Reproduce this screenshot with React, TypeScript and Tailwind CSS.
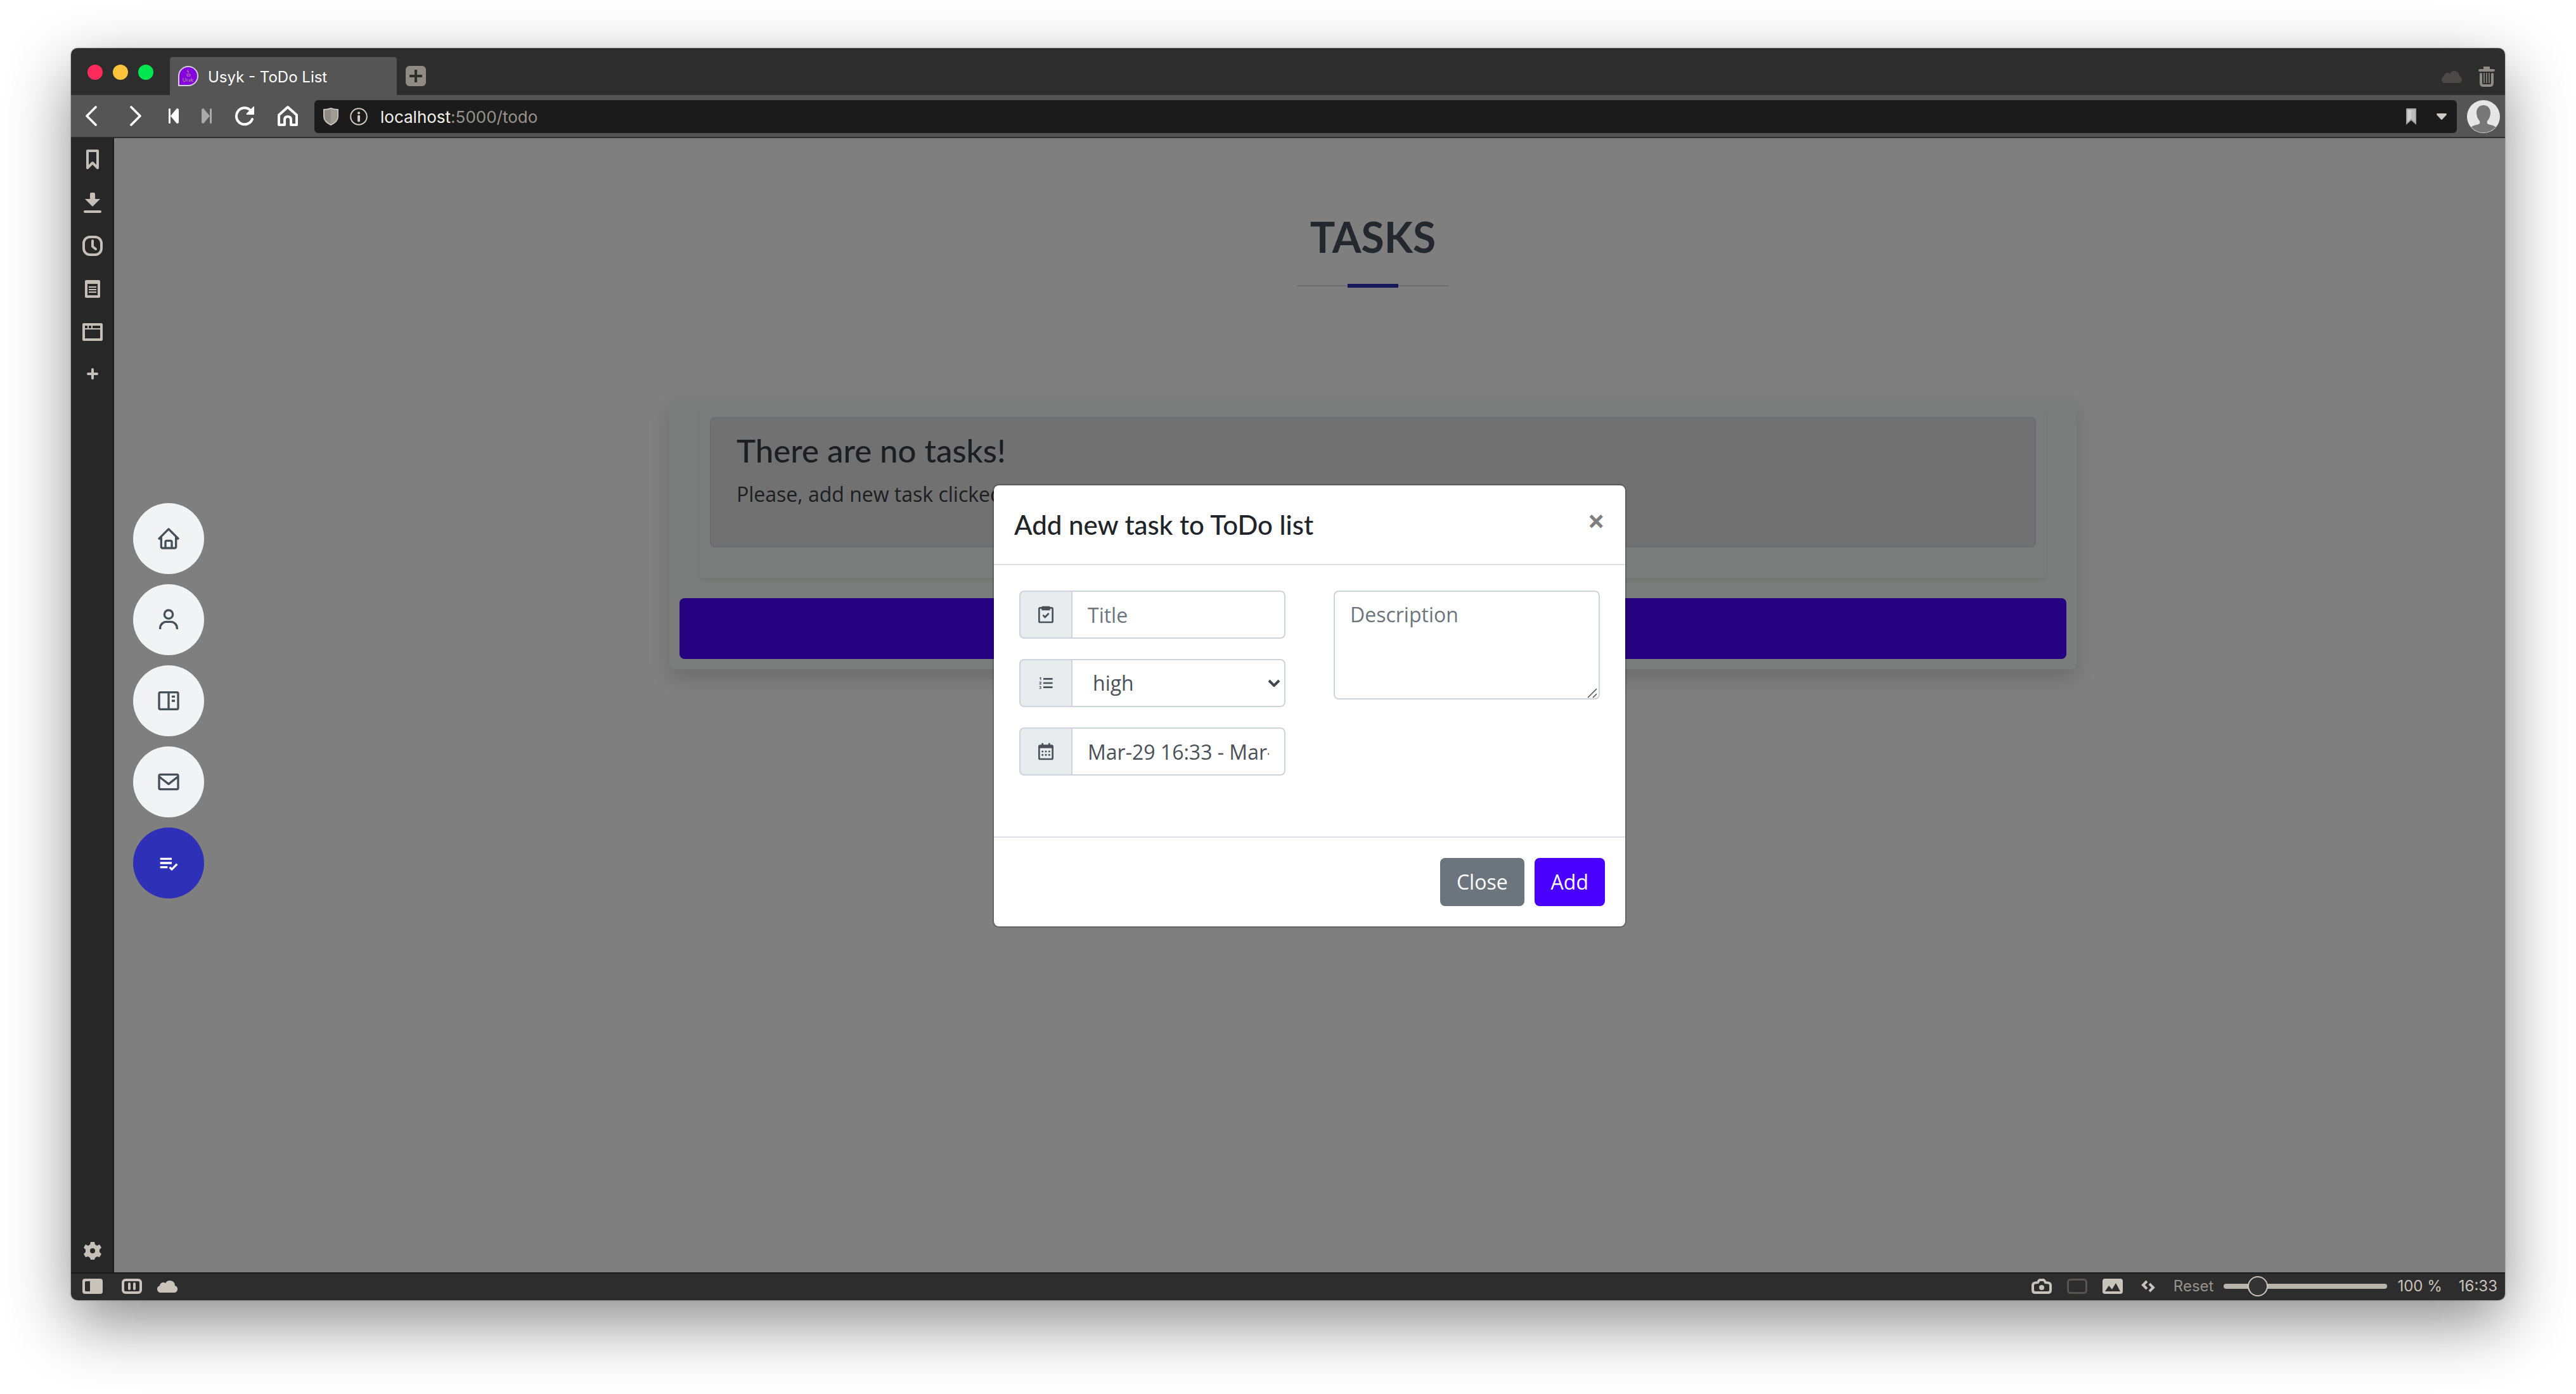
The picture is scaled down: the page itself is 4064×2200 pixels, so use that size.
import { useState, type ReactNode } from "react";
import {
  BiBookContent,
  BiCalendar,
  BiEnvelope,
  BiHome,
  BiListCheck,
  BiListOl,
  BiTask,
  BiUser,
} from "react-icons/bi";

const toolbarIcon = "flex items-center justify-center shrink-0";

function TabStrip() {
  return (
    <header className="flex h-[74px] shrink-0 items-stretch bg-[#2d2d2d] pr-4">
      <div className="flex items-center gap-4 pl-[26px] pr-[26px] pt-0.5">
        <button aria-label="Close window" className="size-6 rounded-full bg-[#ff2b5b]" />
        <button aria-label="Minimize window" className="size-6 rounded-full bg-[#fcc43d]" />
        <button aria-label="Zoom window" className="size-6 rounded-full bg-[#00e650]" />
      </div>
      <div className="mt-3.5 flex w-[358px] items-center gap-3.5 rounded-t-sm bg-[#555555] pl-3">
        <svg viewBox="0 0 34 34" className="size-[34px] shrink-0" aria-hidden="true">
          <path d="M1 33V17A16 16 0 1 1 17 33Z" fill="#d5cfdb" />
          <path d="M3 31V17A14 14 0 1 1 17 31Z" fill="#8400dc" />
          <path
            d="M17 7l-2 2 3 1-2 2M15 14h5v3h-5zM9 20v4q0 2 2 2t2-2v-4M16 22q-2 0-1 2t0 2M18 22l1 4 2-4M22 20v6M25 22l-3 2 3 2"
            fill="none"
            stroke="#b58a9c"
            strokeWidth="1"
          />
        </svg>
        <span className="pt-1 text-2xl text-white">Usyk - ToDo List</span>
      </div>
      <button
        aria-label="New tab"
        className="ml-3.5 mt-7 flex size-8 items-center justify-center rounded-md bg-[#8f8a84]"
      >
        <svg viewBox="0 0 20 20" className="size-5" aria-hidden="true">
          <path d="M10 0v20M0 10h20" stroke="#2d2d2d" strokeWidth="4" />
        </svg>
      </button>
      <div className="ml-auto flex items-center gap-[26px] pt-4">
        <CloudIcon className="h-5 w-8 text-[#4a4946]" />
        <button aria-label="Closed tabs">
          <svg viewBox="0 0 26 32" className="h-8 w-[26px] text-[#8f8a84]" aria-hidden="true">
            <path d="M8 0h10v4h6a2 2 0 0 1 0 4H2a2 2 0 0 1 0-4h6z" fill="currentColor" />
            <path
              d="M4 12v14q0 4 4 4h10q4 0 4-4V12"
              fill="none"
              stroke="currentColor"
              strokeWidth="4"
              strokeLinecap="round"
            />
            <path d="M9 10v16M13 10v16M17 10v16" stroke="currentColor" strokeWidth="1.6" />
          </svg>
        </button>
      </div>
    </header>
  );
}

function CloudIcon({ className }: { className: string }) {
  return (
    <svg viewBox="0 0 32 20" className={className} aria-hidden="true">
      <path
        d="M5.500 20A5.500 5.500 0 0 1 4 9.200A5.500 5.500 0 0 1 13 5.200A8 8 0 0 1 28 9A5.600 5.600 0 0 1 26.500 20Z"
        fill="currentColor"
      />
    </svg>
  );
}

function Toolbar() {
  return (
    <div className="flex h-[68px] shrink-0 items-center border-b-2 border-[#2d2d2d] bg-[#555555] pr-2 text-white">
      <div className="flex items-center pl-1">
        <button aria-label="Back" className={`${toolbarIcon} w-14`}>
          <svg viewBox="0 0 20 32" className="h-8 w-5" aria-hidden="true">
            <path d="M17 2L3 16l14 14" fill="none" stroke="currentColor" strokeWidth="3.600" strokeLinecap="round" strokeLinejoin="round" />
          </svg>
        </button>
        <button aria-label="Forward" className={`${toolbarIcon} ml-3.5 w-14`}>
          <svg viewBox="0 0 20 32" className="h-8 w-5" aria-hidden="true">
            <path d="M3 2l14 14L3 30" fill="none" stroke="currentColor" strokeWidth="3.600" strokeLinecap="round" strokeLinejoin="round" />
          </svg>
        </button>
        <button aria-label="Rewind" className={`${toolbarIcon} ml-1 w-14`}>
          <svg viewBox="0 0 18 24" className="h-6 w-[18px]" aria-hidden="true">
            <path d="M1 1.500Q1 0 2.500 0T4 1.500v21Q4 24 2.500 24T1 22.500zM17 1v22L14 24 4 12 14 0z" fill="currentColor" />
          </svg>
        </button>
        <button aria-label="Fast forward" className={`${toolbarIcon} w-12 text-[#a9a9a9]`}>
          <svg viewBox="0 0 18 24" className="h-6 w-[18px]" aria-hidden="true">
            <path d="M17 1.500Q17 0 15.500 0T14 1.500v21Q14 24 15.500 24T17 22.500zM1 1v22L4 24 14 12 4 0z" fill="currentColor" />
          </svg>
        </button>
        <button aria-label="Reload" className={`${toolbarIcon} ml-1 w-16`}>
          <svg viewBox="0 0 32 32" className="size-8" aria-hidden="true">
            <path d="M28 21A13 13 0 1 1 25 7" fill="none" stroke="currentColor" strokeWidth="4" strokeLinecap="round" />
            <path d="M31 1v13H19q-1-1 0-2L30 1z" fill="currentColor" />
          </svg>
        </button>
        <button aria-label="Home" className={`${toolbarIcon} ml-1 w-16`}>
          <svg viewBox="0 0 34 34" className="size-[34px]" aria-hidden="true">
            <path
              d="M3 15.500L17 3l14 12.500V31H22v-8q0-5-5-5t-5 5v8H3z"
              fill="none"
              stroke="currentColor"
              strokeWidth="4"
              strokeLinejoin="round"
            />
          </svg>
        </button>
      </div>
      <div className="ml-2.5 mt-0.5 flex h-[52px] flex-1 items-center rounded-md bg-[#1b1b1b] pl-3.5 pr-4 text-[#cfc9c1]">
        <svg viewBox="0 0 24 28" className="h-7 w-6 shrink-0" aria-hidden="true">
          <path d="M1 3q6 0 11-2 5 2 11 2v11q0 8-11 13Q1 22 1 14z" fill="#8f8a84" stroke="#c9c3bb" strokeWidth="2" />
          <path d="M12 3q5 1.500 9 2v10q0 6-9 10z" fill="#a09b94" />
        </svg>
        <svg viewBox="0 0 28 28" className="ml-[18px] size-7 shrink-0" aria-hidden="true">
          <circle cx="14" cy="14" r="12.800" fill="none" stroke="currentColor" strokeWidth="2" />
          <circle cx="14" cy="8.300" r="2" fill="currentColor" />
          <path d="M14 13.500v7" stroke="currentColor" strokeWidth="4" strokeLinecap="round" />
        </svg>
        <span className="ml-5 text-[26px] text-[#98938c]">
          <span className="text-[#f4f1ec]">localhost</span>:5000/todo
        </span>
        <svg viewBox="0 0 16 26" className="ml-auto h-[26px] w-4 shrink-0" aria-hidden="true">
          <path d="M0 1q0-1 1-1h14q1 0 1 1v25l-8-7-8 7z" fill="#a3a3a3" />
          <path d="M2 2h6v14l-6 6z" fill="#cfcfcf" />
          <path d="M8 2h6v20l-6-6z" fill="#bdbdbd" />
        </svg>
        <svg viewBox="0 0 16 10" className="ml-8 h-2.5 w-4 shrink-0" aria-hidden="true">
          <path d="M1 0h14q2 1 0 3L9 9.500q-1 .8-2 0L1 3Q-1 1 1 0z" fill="currentColor" />
        </svg>
      </div>
      <button aria-label="Profile" className="ml-4 mt-0.5 shrink-0">
        <svg viewBox="0 0 52 52" className="size-[52px]" aria-hidden="true">
          <circle cx="26" cy="26" r="26" fill="#e6e6e6" />
          <path
            d="M26 8c7 0 11 5 11 12 0 5-2 10-5 13-1 3 0 5 3 5.500 4 .7 8 2 10.500 4A26 26 0 0 1 6.500 42.500c2.500-2 6.500-3.300 10.500-4 3-.5 4-2.500 3-5.500-3-3-5-8-5-13C15 13 19 8 26 8z"
            fill="#777777"
          />
        </svg>
      </button>
    </div>
  );
}

function PanelButton({ label, children }: { label: string; children: ReactNode }) {
  return (
    <button aria-label={label} className="flex h-[68px] w-full items-center justify-center pl-0.5">
      <svg viewBox="0 0 32 32" className="size-8" aria-hidden="true" fill="none" stroke="currentColor">
        {children}
      </svg>
    </button>
  );
}

function PanelBar() {
  return (
    <aside className="flex w-[68px] shrink-0 flex-col border-r-2 border-[#1b1b1b] bg-[#272727] text-[#c5bfb7]">
      <PanelButton label="Bookmarks">
        <path d="M8 2h16v27l-8-8-8 8z" strokeWidth="4" strokeLinejoin="round" />
      </PanelButton>
      <PanelButton label="Downloads">
        <path d="M12 2q0-2 2-2h4q2 0 2 2v8h8L16 22 4 10h8z" fill="currentColor" stroke="none" />
        <path d="M4 30h24" strokeWidth="4" strokeLinecap="round" />
      </PanelButton>
      <PanelButton label="History">
        <rect x="2" y="2" width="28" height="28" rx="10" strokeWidth="4" />
        <path d="M16 8v9l5 4" strokeWidth="4" strokeLinecap="round" strokeLinejoin="round" />
      </PanelButton>
      <PanelButton label="Notes">
        <path d="M6 4h20v24H6z" strokeWidth="4" strokeLinejoin="round" />
        <path d="M6 6h20" strokeWidth="4" />
        <path d="M10 13h12M10 17h12M10 21h12" strokeWidth="2" />
      </PanelButton>
      <PanelButton label="Window">
        <path d="M2 4h28v24H2z" strokeWidth="4" strokeLinejoin="round" />
        <path d="M2 11h28M9 4v8M15 4v8" strokeWidth="2" />
      </PanelButton>
      <PanelButton label="Add web panel">
        <path d="M16 7v14M9 14h14" strokeWidth="4" strokeLinecap="round" />
      </PanelButton>
      <div className="mt-auto">
        <PanelButton label="Settings">
          <path
            d="M13 2h6l1 4 3 2 4-2 3 5-3 3v4l3 3-3 5-4-1-3 2-1 3h-6l-1-3-3-2-4 1-3-5 3-3v-4l-3-3 3-5 4 2 3-2z"
            fill="currentColor"
            stroke="none"
          />
          <circle cx="16" cy="16" r="4" fill="#272727" stroke="none" />
        </PanelButton>
      </div>
    </aside>
  );
}

function StatusBar() {
  const [zoom, setZoom] = useState(100);
  return (
    <footer className="flex h-11 shrink-0 items-center border-t-2 border-[#1b1b1b] bg-[#2d2d2d] pb-0.5 pl-[18px] pr-3 text-2xl text-[#c9c3bb]">
      <button aria-label="Toggle panel">
        <svg viewBox="0 0 32 24" className="h-6 w-8" aria-hidden="true">
          <rect width="32" height="24" rx="4" fill="currentColor" />
          <path d="M6 4h6v16H6q-2 0-2-2V6q0-2 2-2z" fill="#2d2d2d" />
        </svg>
      </button>
      <button aria-label="Tile pages" className="ml-[30px]">
        <svg viewBox="0 0 32 24" className="h-6 w-8" aria-hidden="true" fill="none" stroke="currentColor" strokeWidth="4">
          <rect x="2" y="2" width="28" height="20" rx="4" />
          <path d="M12 8v8M20 8v8" strokeLinecap="round" />
        </svg>
      </button>
      <button aria-label="Sync" className="ml-6">
        <CloudIcon className="h-5 w-8" />
      </button>
      <button aria-label="Capture page" className="ml-auto">
        <svg viewBox="0 0 32 24" className="h-6 w-8" aria-hidden="true">
          <path
            d="M10 6q2-4 3-4h6q1 0 3 4 8 0 8 4v8q0 4-4 4H6q-4 0-4-4v-8q0-4 8-4z"
            fill="none"
            stroke="currentColor"
            strokeWidth="4"
            strokeLinejoin="round"
          />
          <circle cx="16" cy="14" r="4" fill="currentColor" />
        </svg>
      </button>
      <svg viewBox="0 0 32 24" className="ml-6 h-6 w-8 text-[#565553]" aria-hidden="true">
        <rect x="1.500" y="1.500" width="29" height="21" rx="4" fill="none" stroke="currentColor" strokeWidth="3" />
      </svg>
      <button aria-label="Toggle images" className="ml-6">
        <svg viewBox="0 0 32 24" className="h-6 w-8" aria-hidden="true">
          <rect width="32" height="24" rx="4" fill="currentColor" />
          <path d="M4 20l6-9 5 6 6-10 7 13z" fill="#2d2d2d" />
        </svg>
      </button>
      <button aria-label="Page actions" className="ml-7">
        <svg viewBox="0 0 24 20" className="h-5 w-6" aria-hidden="true" fill="none" stroke="currentColor" strokeWidth="4">
          <path d="M10 2L4 8l6 6M14 6l6 6-6 6" />
        </svg>
      </button>
      <button className="ml-7 text-[#97928b]" onClick={() => setZoom(100)}>
        Reset
      </button>
      <input
        type="range"
        aria-label="Zoom"
        min={20}
        max={500}
        value={zoom}
        onChange={(e) => setZoom(Number(e.target.value))}
        className="ml-4 h-2 w-[258px] appearance-none rounded-full bg-[#b9b3ab] [&::-webkit-slider-thumb]:size-8 [&::-webkit-slider-thumb]:appearance-none [&::-webkit-slider-thumb]:rounded-full [&::-webkit-slider-thumb]:border-2 [&::-webkit-slider-thumb]:border-[#c9c3bb] [&::-webkit-slider-thumb]:bg-[#333333]"
      />
      <span className="ml-4">{zoom} %</span>
      <span className="ml-[26px]">16:33</span>
    </footer>
  );
}

const sections = [
  { label: "Home", Icon: BiHome, active: false },
  { label: "About", Icon: BiUser, active: false },
  { label: "Portfolio", Icon: BiBookContent, active: false },
  { label: "Contact", Icon: BiEnvelope, active: false },
  { label: "ToDo", Icon: BiListCheck, active: true },
];

function SectionNav() {
  return (
    <nav className="absolute inset-y-0 left-[30px] z-10 flex flex-col justify-center gap-4 pb-3.5">
      {sections.map(({ label, Icon, active }) => (
        <a
          key={label}
          href={`#${label.toLowerCase()}`}
          aria-label={label}
          className={
            active
              ? "flex size-28 items-center justify-center rounded-full bg-[#2e31b8] text-white"
              : "flex size-28 items-center justify-center rounded-full bg-[#f2f3f5] text-[#45505b]"
          }
        >
          <Icon className="size-10" />
        </a>
      ))}
    </nav>
  );
}

function TasksSection() {
  return (
    <main className="pl-[200px] pt-[120px]">
      <div className="mx-auto max-w-[2280px] px-[30px]">
        <div className="flex flex-col items-center">
          <h2 className="font-['Lato'] text-[66px] font-bold leading-[72px] text-[#45505b]">TASKS</h2>
          <div className="mt-[38px] flex h-1.5 w-60 items-center justify-center bg-[linear-gradient(#dddddd,#dddddd)] bg-[length:100%_2px] bg-center bg-no-repeat">
            <div className="h-1.5 w-20 bg-[#2e31b8]" />
          </div>
        </div>
        <div className="mt-[172px] rounded-lg bg-[#f7fbf8] p-4 shadow-[0_16px_32px_rgba(0,0,0,0.15)]">
          <div className="mx-8 p-4 shadow-[0_4px_8px_rgba(0,0,0,0.075)]">
            <div className="rounded-lg border-2 border-[#d6d8db] bg-[#e2e3e5] px-10 pb-[26px] pt-[22px] text-[#383d41]">
              <h4 className="mb-4 font-['Lato'] text-[51px] font-medium leading-[58px]">There are no tasks!</h4>
              <p className="mb-8 text-[32px] leading-[48px]">Please, add new task clicked</p>
            </div>
            <div className="h-8" />
          </div>
          <button aria-label="Add new task" className="mt-8 block h-24 w-full rounded-lg bg-[#4a00ff]" />
        </div>
      </div>
    </main>
  );
}

function PrependIcon({ children }: { children: ReactNode }) {
  return (
    <span className="flex w-[82px] shrink-0 items-center justify-center rounded-l-lg border-2 border-r-0 border-[#ced4da] bg-[#e9ecef] text-[#495057]">
      {children}
    </span>
  );
}

const field = "h-[76px] w-full min-w-0 rounded-r-lg border-2 border-[#ced4da] bg-white text-[#495057]";

function TaskDialog() {
  const [priority, setPriority] = useState("high");
  return (
    <div
      role="dialog"
      aria-labelledby="task-dialog-title"
      className="absolute left-1/2 top-[546px] z-20 w-[1000px] -translate-x-1/2 rounded-[10px] border-2 border-black/20 bg-white bg-clip-padding text-[32px] leading-[48px]"
    >
      <div className="flex items-start justify-between border-b-2 border-[#dee2e6] p-8">
        <h5 id="task-dialog-title" className="font-['Lato'] text-[42px] font-medium leading-[60px] text-[#212529]">
          Add new task to ToDo list
        </h5>
        <button aria-label="Close dialog" className="text-5xl font-bold leading-[48px] text-black/50">
          ×
        </button>
      </div>
      <form className="grid grid-cols-2 gap-x-[76px] px-10 pb-24 pt-10" onSubmit={(e) => e.preventDefault()}>
        <div className="flex flex-col gap-8">
          <label className="flex">
            <PrependIcon>
              <BiTask className="size-8" />
            </PrependIcon>
            <input aria-label="Title" placeholder="Title" className={`${field} px-6 placeholder:text-[#6c757d]`} />
          </label>
          <label className="flex">
            <PrependIcon>
              <BiListOl className="size-8" />
            </PrependIcon>
            <span className="relative flex min-w-0 flex-1">
              <select
                aria-label="Priority"
                value={priority}
                onChange={(e) => setPriority(e.target.value)}
                className={`${field} appearance-none pl-8 pr-10`}
              >
                <option value="high">high</option>
              </select>
              <svg
                viewBox="0 0 20 12"
                className="pointer-events-none absolute right-2 top-8 h-3 w-5 text-[#40474e]"
                aria-hidden="true"
              >
                <path d="M2 2l8 8 8-8" fill="none" stroke="currentColor" strokeWidth="4" />
              </svg>
            </span>
          </label>
          <label className="flex">
            <PrependIcon>
              <BiCalendar className="size-8" />
            </PrependIcon>
            <input aria-label="Dates" defaultValue="Mar-29 16:33 - Mar-30 16:33" className={`${field} px-6`} />
          </label>
        </div>
        <div className="relative self-start">
          <textarea
            aria-label="Description"
            placeholder="Description"
            className="block h-[172px] w-full resize-none rounded-lg border-2 border-[#ced4da] px-6 py-3 text-[#495057] placeholder:text-[#6c757d]"
          />
          <svg
            viewBox="0 0 16 16"
            className="pointer-events-none absolute bottom-0.5 right-1 size-4 text-[#555555]"
            aria-hidden="true"
          >
            <path d="M1 15L15 1M9 15l6-6" stroke="currentColor" strokeWidth="1.6" />
          </svg>
        </div>
      </form>
      <div className="flex justify-end gap-4 border-t-2 border-[#dee2e6] p-8 text-white">
        <button className="rounded-lg bg-[#6c757d] px-[26px] py-3.5">Close</button>
        <button className="rounded-lg bg-[#4a00ff] px-[26px] py-3.5">Add</button>
      </div>
    </div>
  );
}

export default function App() {
  return (
    <div className="flex min-h-screen flex-col bg-white px-28 pb-[148px] pt-[76px] font-['Inter',sans-serif]">
      <div className="flex flex-1 flex-col overflow-hidden rounded-[10px] shadow-[0_0_2px_rgba(0,0,0,0.6),0_36px_100px_rgba(0,0,0,0.45)]">
        <TabStrip />
        <Toolbar />
        <div className="flex flex-1">
          <PanelBar />
          <div className="relative min-h-[1300px] flex-1 overflow-hidden bg-white font-['Open_Sans',sans-serif]">
            <TasksSection />
            <div className="absolute inset-0 bg-black/50" />
            <SectionNav />
            <TaskDialog />
          </div>
        </div>
        <StatusBar />
      </div>
    </div>
  );
}
